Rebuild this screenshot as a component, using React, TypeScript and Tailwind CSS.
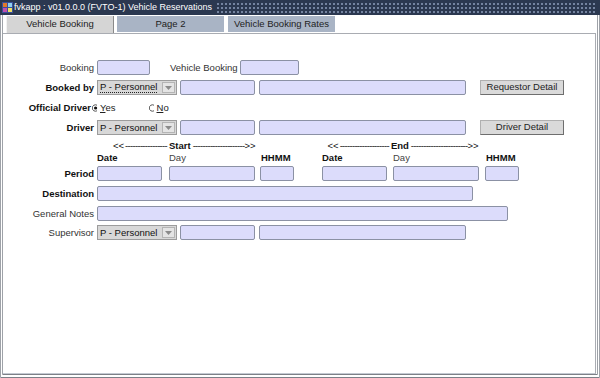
import React from 'react';

function Field({ w }: { w: string }) {
  return <div className={`${w} h-[15px] shrink-0 rounded-[2px] border border-[#8b91a4] bg-[#dcdcfb]`} />;
}

function Select({ focused }: { focused?: boolean }) {
  return (
    <div className="flex h-[15px] w-[80px] shrink-0 items-center border border-[#9c9c9c] bg-[#d8d8d8] pl-[2px]">
      <span className={focused ? 'border-b border-dotted border-[#222] leading-[10px] text-[#111]' : 'leading-[10px] text-[#111]'}>
        P - Personnel
      </span>
      <div className="ml-auto mr-[1px] flex h-[11px] w-[13px] items-center justify-center border border-[#b4b4b4] bg-[#e4e4e4]">
        <svg width="7" height="4" viewBox="0 0 7 4">
          <path d="M0 0h7L3.5 4z" fill="#8a8a8a" />
        </svg>
      </div>
    </div>
  );
}

function Button({ label }: { label: string }) {
  return (
    <div className="ml-[14px] flex h-[15px] w-[84px] shrink-0 items-center justify-center border border-[#b0b0b0] border-b-[#6e6e6e] border-r-[#6e6e6e] bg-[#dadada] text-[#222]">
      {label}
    </div>
  );
}

function Radio({ on }: { on?: boolean }) {
  return (
    <svg width="7" height="8" viewBox="0 0 7 8" className="shrink-0">
      <path d="M5 1.2A3.2 3.2 0 1 0 5 6.8" fill="none" stroke="#555" strokeWidth="1" />
      {on && <circle cx="3.6" cy="4" r="1.6" fill="#111" />}
    </svg>
  );
}

function Label({ children, bold }: { children: React.ReactNode; bold?: boolean }) {
  return (
    <div className={`w-[91px] shrink-0 text-right leading-none ${bold ? 'font-bold text-[#111]' : 'text-[#333]'}`}>
      {children}
    </div>
  );
}

function PersonRow({ label, button, focused }: { label: string; button: string; focused?: boolean }) {
  return (
    <div className="flex h-[15px] items-center">
      <Label bold>{label}</Label>
      <div className="ml-[3px]">
        <Select focused={focused} />
      </div>
      <div className="ml-[3px]">
        <Field w="w-[75px]" />
      </div>
      <div className="ml-[4px]">
        <Field w="w-[207px]" />
      </div>
      {button && <Button label={button} />}
    </div>
  );
}

export default function App() {
  return (
    <div className="flex h-[378px] w-[600px] flex-col overflow-hidden bg-[#b9bcc2] font-['Liberation_Sans',Arial,sans-serif] text-[9.5px]">
      {/* title bar */}
      <div className="flex h-[15px] shrink-0 items-center bg-[#2b3850] pl-[2px] pr-[3px]">
        <svg width="11" height="11" viewBox="0 0 11 11" className="shrink-0">
          <rect x="0" y="0" width="11" height="11" fill="#3b4f9a" />
          <rect x="1" y="1" width="4" height="4" fill="#e07a2a" />
          <rect x="6" y="1" width="4" height="4" fill="#8fd0f0" />
          <rect x="1" y="6" width="4" height="4" fill="#c04fb0" />
          <rect x="6" y="6" width="4" height="4" fill="#f0e060" />
        </svg>
        <span className="ml-[1px] whitespace-nowrap text-[9px] leading-none text-white">
          fvkapp : v01.0.0.0 (FVTO-1) Vehicle Reservations
        </span>
        <div className="ml-[4px] h-[11px] flex-1 bg-[radial-gradient(circle,#7686a2_0.7px,transparent_1px)] bg-[length:4px_4px]" />
      </div>

      {/* window body */}
      <div className="flex flex-1 flex-col border-x-[3px] border-b-[4px] border-double border-x-[#9ea2a8] border-b-[#7d8087] bg-white">
        {/* tabs */}
        <div className="flex h-[18px] shrink-0 items-end pl-[3px] text-[#222]">
          <div className="flex h-[17px] w-[108px] items-center justify-center border-l border-r border-[#f2f2f2] border-r-[#8a8a8a] bg-[#d5d5d5]">
            Vehicle Booking
          </div>
          <div className="ml-[3px] mt-[1px] flex h-[16px] w-[107px] items-center justify-center self-start bg-[#a9b4c5]">
            Page 2
          </div>
          <div className="ml-[4px] mt-[1px] flex h-[16px] w-[107px] items-center justify-center self-start bg-[#a9b4c5]">
            Vehicle Booking Rates
          </div>
        </div>

        {/* panel */}
        <div className="mr-[1px] flex flex-1 flex-col border-r border-b border-t border-[#a9acb2] border-b-[#c4cad2] bg-white">
          <div className="mt-[26px] flex h-[15px] items-center">
            <Label>Booking</Label>
            <div className="ml-[3px]">
              <Field w="w-[53px]" />
            </div>
            <span className="ml-[20px] leading-none text-[#333]">Vehicle Booking</span>
            <div className="ml-[2px]">
              <Field w="w-[59px]" />
            </div>
          </div>

          <div className="mt-[5px]">
            <PersonRow label="Booked by" button="Requestor Detail" focused />
          </div>

          <div className="mt-[5px] flex h-[15px] items-center leading-none">
            <div className="w-[88px] shrink-0 text-right font-bold text-[#111]">Official Driver</div>
            <div className="ml-[1px]">
              <Radio on />
            </div>
            <span className="ml-[1px] text-[#222]">
              <span className="underline">Y</span>es
            </span>
            <div className="ml-[33px]">
              <Radio />
            </div>
            <span className="ml-[1px] text-[#222]">
              <span className="underline">N</span>o
            </span>
          </div>

          <div className="mt-[5px]">
            <PersonRow label="Driver" button="Driver Detail" />
          </div>

          <div className="mt-[6px] flex h-[9px] items-center whitespace-nowrap pl-[110px] leading-none text-[#111]">
            <span className="mr-[1px]">&lt;&lt;</span>
            <span className="tracking-[-0.7px]">-----------------</span>
            <span className="mx-[2px] font-bold">Start</span>
            <span className="tracking-[-0.7px]">---------------------</span>
            <span>&gt;&gt;</span>
            <span className="ml-[72px] mr-[1px]">&lt;&lt;</span>
            <span className="tracking-[-0.7px]">--------------------</span>
            <span className="mx-[2px] font-bold">End</span>
            <span className="tracking-[-0.7px]">-----------------------</span>
            <span>&gt;&gt;</span>
          </div>

          <div className="mt-[3px] flex h-[10px] items-center pl-[94px] leading-none">
            <span className="w-[72px] font-bold text-[#111]">Date</span>
            <span className="w-[92px] text-[#444]">Day</span>
            <span className="w-[61px] font-bold text-[#111]">HHMM</span>
            <span className="w-[71px] font-bold text-[#111]">Date</span>
            <span className="w-[93px] text-[#444]">Day</span>
            <span className="font-bold text-[#111]">HHMM</span>
          </div>

          <div className="mt-[3px] flex h-[15px] items-center">
            <Label bold>Period</Label>
            <div className="ml-[3px]">
              <Field w="w-[65px]" />
            </div>
            <div className="ml-[7px]">
              <Field w="w-[86px]" />
            </div>
            <div className="ml-[5px]">
              <Field w="w-[34px]" />
            </div>
            <div className="ml-[28px]">
              <Field w="w-[65px]" />
            </div>
            <div className="ml-[6px]">
              <Field w="w-[86px]" />
            </div>
            <div className="ml-[6px]">
              <Field w="w-[34px]" />
            </div>
          </div>

          <div className="mt-[5px] flex h-[15px] items-center">
            <Label bold>Destination</Label>
            <div className="ml-[3px]">
              <Field w="w-[376px]" />
            </div>
          </div>

          <div className="mt-[5px] flex h-[15px] items-center">
            <Label>General Notes</Label>
            <div className="ml-[3px]">
              <Field w="w-[411px]" />
            </div>
          </div>

          <div className="mt-[4px] flex h-[15px] items-center">
            <Label>Supervisor</Label>
            <div className="ml-[3px]">
              <Select />
            </div>
            <div className="ml-[3px]">
              <Field w="w-[75px]" />
            </div>
            <div className="ml-[4px]">
              <Field w="w-[207px]" />
            </div>
          </div>
        </div>
      </div>
    </div>
  );
}
